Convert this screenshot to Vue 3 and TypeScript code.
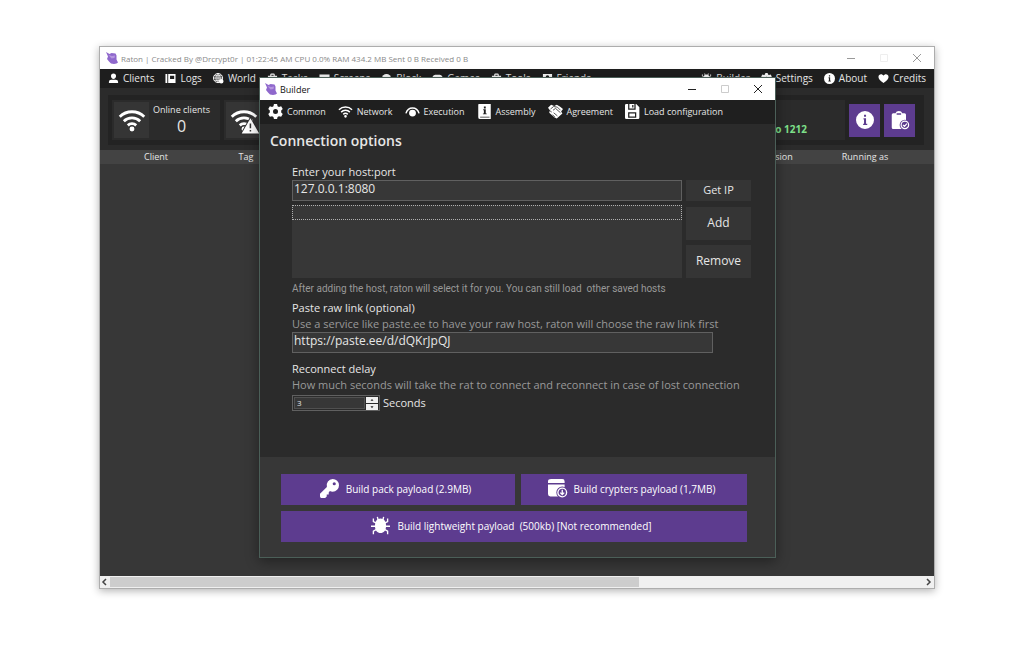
<script setup lang="ts">
import { ref } from 'vue'

interface Shape {
  d: string
  line?: number
  color?: string
}

const white = '#ffffff'
const wifi: Shape[] = [
  { d: 'M1.5 9.2a15 15 0 0 1 21 0', line: 2.4 },
  { d: 'M5 13a10 10 0 0 1 14 0', line: 2.4 },
  { d: 'M8.4 16.6a5.2 5.2 0 0 1 7.2 0', line: 2.4 },
  { d: 'M12 17.6a2.1 2.1 0 1 0 0 4.2a2.1 2.1 0 0 0 0-4.2z' },
]

const icons: Record<string, Shape[]> = {
  user: [{ d: 'M12 1a5.5 5.5 0 0 1 5.5 5.5c0 3.5-2.5 6.5-5.5 6.5s-5.5-3-5.5-6.5A5.5 5.5 0 0 1 12 1zM2 22v-3q0-4.5 5-4.5h10q5 0 5 4.5v3z' }],
  logs: [{ d: 'M1 2h4v20H1zM7 2h16v20H7zM11 6v7h9V6z' }],
  world: [
    { d: 'M11 1a10 10 0 1 0 0 20a10 10 0 0 0 0-20z', line: 2 },
    { d: 'M1 11h20M11 1v20M3 6h16M3 16h16M11 1c-6 6-6 14 0 20M11 1c6 6 6 14 0 20', line: 1.8 },
    { d: 'M18 13a5 5 0 1 0 0 10a5 5 0 0 0 0-10z' },
  ],
  bag: [{ d: 'M7 6V4q0-3 3-3h4q3 0 3 3v2h5v16H2V6zM9.5 6h5V4h-5z' }],
  screen: [{ d: 'M1 3h22v14H1zM8 19h8v3H8z' }],
  ball: [{ d: 'M12 2a10 10 0 1 0 0 20a10 10 0 0 0 0-20z' }],
  pad: [{ d: 'M7 4h10q7 0 7 14q-4 3-8-3H8q-4 6-8 3Q0 4 7 4z' }],
  friend: [{ d: 'M2 2h20v20H2zM12 5a4 4 0 1 0 0 8a4 4 0 0 0 0-8z' }],
  gear: [
    { d: 'M9.5 0h5l.8 3.4 2.2 1.2L21 3.5l2.6 4.4-2.5 2.5v3.2l2.5 2.5L21 20.5l-3.5-1.1-2.2 1.2-.8 3.4h-5l-.8-3.4-2.2-1.2L3 20.5.4 16.1l2.5-2.5v-3.2L.4 7.9 3 3.5l3.5 1.1 2.2-1.2zM12 8a4 4 0 1 0 0 8a4 4 0 0 0 0-8z' },
  ],
  about: [{ d: 'M12 0a12 12 0 1 0 0 24a12 12 0 0 0 0-24zM10.7 5h2.7v2.7h-2.7zM10 9.5h3.4V17H15v1.8H9.5V17h1.2v-5.6H10z' }],
  heart: [{ d: 'M12 22C4 16 1 12.5 1 8.5C1 2 9 .5 12 6C15 .5 23 2 23 8.5C23 12.5 20 16 12 22z' }],
  wifi,
  wifiAlert: [
    ...wifi,
    { d: 'M17.5 10.5L25 23.5H10z', line: 1.5, color: '#2b2b2b' },
    { d: 'M17.5 10.5L25 23.5H10z' },
    { d: 'M17.5 15v4M17.5 20.5v1.4', line: 1.3, color: '#333333' },
  ],
  clipboard: [
    { d: 'M6 3q1-3 4.5-3T15 3h3q2 0 2 2v17q0 2-2 2H3q-2 0-2-2V5q0-2 2-2zM7.5 3v2h6V3z' },
    { d: 'M18.5 11.5a7 7 0 1 0 0 14a7 7 0 0 0 0-14z', color: '#5d3c8f' },
    { d: 'M18.5 13.5a5 5 0 1 0 0 10a5 5 0 0 0 0-10zM16 18.5l2 2 3.2-3.6', line: 1.6 },
  ],
  eye: [
    { d: 'M1.5 15C5 3.5 19 3.5 22.5 15', line: 2.3 },
    { d: 'M12 9a5.5 5.5 0 1 0 0 11a5.5 5.5 0 0 0 0-11z' },
  ],
  book: [{ d: 'M3 0h19v24H5q-3 0-3-3V1q0-1 1-1zM5 20.5v1h15v-1zM11 4h3v3h-3zM10 8.5h4V15h1.5v1.5H9.5V15H11v-5h-1z' }],
  hands: [
    { d: 'M0 6l5-5 5 2 4-2 5 3 5 4-3 4 2 3-9 8-4-2-8-7 1-4z' },
    { d: 'M4 8l5-4 6 1 5 5M8 10l4-3 8 7M9 14l6 5M7 17l4 4M2 10l4 3', line: 1.2, color: '#242424' },
  ],
  floppy: [{ d: 'M2 0h3v9h12V0h1l5 5v17q0 2-2 2H2q-2 0-2-2V2q0-2 2-2zM7 0h8v7H7zM11.5 1.5v4h2v-4zM5 13v9h13v-9zM7 15h9v5H7z' }],
  key: [{ d: 'M16 0a8 8 0 0 1 0 16q-2 0-3.5-.7L11 17v2.5H8.5V22L6.5 24H1l-1-2v-3.5L8.7 10A8 8 0 0 1 16 0zM18 4a2 2 0 1 0 0 4a2 2 0 0 0 0-4z' }],
  archive: [
    { d: 'M4 0h14q3 0 3 3v2H0V3q0-3 4-3zM0 7h21v12q0 3-3 3H3q-3 0-3-3z' },
    { d: 'M18 9.5a7.5 7.5 0 1 0 0 15a7.5 7.5 0 0 0 0-15z', color: '#5d3c8f' },
    { d: 'M18 11.5a5.5 5.5 0 1 0 0 11a5.5 5.5 0 0 0 0-11zM18 13.5v6M15.5 17.2L18 19.7l2.5-2.5', line: 1.7 },
  ],
  bug: [
    { d: 'M12 3c5 0 7 4 7 9.5s-3 9-7 9-7-3.5-7-9S7 3 12 3z' },
    { d: 'M9 5L8 1M15 5l1-4M7 9L3 7V3M17 9l4-2V3M7 13H0M17 13h7M7 17l-4 2v4M17 17l4 2v4', line: 1.7 },
  ],
}

const menuLeft = [
  { label: 'Clients', icon: 'user' },
  { label: 'Logs', icon: 'logs' },
  { label: 'World', icon: 'world' },
  { label: 'Tasks', icon: 'bag' },
  { label: 'Screens', icon: 'screen' },
  { label: 'Block', icon: 'ball' },
  { label: 'Games', icon: 'pad' },
  { label: 'Tools', icon: 'bag' },
  { label: 'Friends', icon: 'friend' },
]
const menuRight = [
  { label: 'Builder', icon: 'bug' },
  { label: 'Settings', icon: 'gear' },
  { label: 'About', icon: 'about' },
  { label: 'Credits', icon: 'heart' },
]
const tabs = [
  { label: 'Common', icon: 'gear' },
  { label: 'Network', icon: 'wifi' },
  { label: 'Execution', icon: 'eye' },
  { label: 'Assembly', icon: 'book' },
  { label: 'Agreement', icon: 'hands' },
  { label: 'Load configuration', icon: 'floppy' },
]

const host = ref('127.0.0.1:8080')
const rawLink = ref('https://paste.ee/d/dQKrJpQJ')
const delay = ref(3)

const paint = (s: Shape) =>
  s.line
    ? { fill: 'none', stroke: s.color ?? white, 'stroke-width': s.line }
    : { fill: s.color ?? white }
</script>

<template>
  <main class="desktop">
    <section class="window">
      <header class="titlebar">
        <svg class="logo" viewBox="0 0 24 24">
          <path fill="#8f68cc" d="M0 0l7 4 4-2 8 1 2 4v8l3 6-3 2-5 1-6-1-4-4-4-5 2-5z" />
          <path fill="#b596df" d="M5 6l7 2 6-1-1 5-6 1z" />
        </svg>
        <span class="caption">Raton | Cracked By @Drcrypt0r | 01:22:45 AM CPU 0.0% RAM 434.2 MB Sent 0 B Received 0 B</span>
        <div class="controls">
          <button type="button" aria-label="Minimize"><svg viewBox="0 0 10 10"><path d="M1 5.5h8" /></svg></button>
          <button type="button" aria-label="Maximize" disabled><svg viewBox="0 0 10 10"><path d="M1.5 1.5h7v7h-7z" /></svg></button>
          <button type="button" aria-label="Close"><svg viewBox="0 0 10 10"><path d="M1 1l8 8M9 1l-8 8" /></svg></button>
        </div>
      </header>

      <nav class="menu">
        <button v-for="m in menuLeft" :key="m.label" type="button" class="menu-item">
          <svg viewBox="0 0 24 24"><path v-for="(s, i) in icons[m.icon]" :key="i" :d="s.d" fill-rule="evenodd" v-bind="paint(s)" /></svg>
          {{ m.label }}
        </button>
        <span class="spacer"></span>
        <button v-for="m in menuRight" :key="m.label" type="button" class="menu-item">
          <svg viewBox="0 0 24 24"><path v-for="(s, i) in icons[m.icon]" :key="i" :d="s.d" fill-rule="evenodd" v-bind="paint(s)" /></svg>
          {{ m.label }}
        </button>
      </nav>

      <div class="stats">
        <div class="card">
          <div class="card-icon">
            <svg viewBox="0 0 24 24"><path v-for="(s, i) in icons.wifi" :key="i" :d="s.d" v-bind="paint(s)" /></svg>
          </div>
          <div class="card-text">
            <span>Online clients</span>
            <strong>0</strong>
          </div>
        </div>
        <div class="card">
          <div class="card-icon">
            <svg viewBox="0 0 24 24"><path v-for="(s, i) in icons.wifiAlert" :key="i" :d="s.d" v-bind="paint(s)" /></svg>
          </div>
        </div>
        <div class="card wide"><span class="status">o 1212</span></div>
        <button type="button" class="square" aria-label="Information">
          <svg viewBox="0 0 24 24"><path v-for="(s, i) in icons.about" :key="i" :d="s.d" fill-rule="evenodd" v-bind="paint(s)" /></svg>
        </button>
        <button type="button" class="square" aria-label="Tasks done">
          <svg viewBox="0 0 24 24"><path v-for="(s, i) in icons.clipboard" :key="i" :d="s.d" fill-rule="evenodd" v-bind="paint(s)" /></svg>
        </button>
      </div>

      <table class="clients">
        <colgroup>
          <col class="c-client" /><col class="c-tag" /><col /><col class="c-version" /><col class="c-run" />
        </colgroup>
        <thead>
          <tr><th>Client</th><th>Tag</th><th></th><th>Version</th><th>Running as</th></tr>
        </thead>
      </table>
      <div class="rows"></div>

      <div class="scrollbar">
        <button type="button" aria-label="Scroll left"><svg viewBox="0 0 10 10"><path d="M6 2L3 5l3 3" /></svg></button>
        <div class="track"><div class="thumb"></div></div>
        <button type="button" aria-label="Scroll right"><svg viewBox="0 0 10 10"><path d="M3 2l3 3-3 3" /></svg></button>
      </div>

      <section class="dialog" role="dialog" aria-label="Builder">
        <header class="titlebar active">
          <svg class="logo" viewBox="0 0 24 24">
            <path fill="#8f68cc" d="M0 0l7 4 4-2 8 1 2 4v8l3 6-3 2-5 1-6-1-4-4-4-5 2-5z" />
            <path fill="#b596df" d="M5 6l7 2 6-1-1 5-6 1z" />
          </svg>
          <span class="caption">Builder</span>
          <div class="controls">
            <button type="button" aria-label="Minimize"><svg viewBox="0 0 10 10"><path d="M1 5.5h8" /></svg></button>
            <button type="button" aria-label="Maximize" disabled><svg viewBox="0 0 10 10"><path d="M1.5 1.5h7v7h-7z" /></svg></button>
            <button type="button" aria-label="Close"><svg viewBox="0 0 10 10"><path d="M1 1l8 8M9 1l-8 8" /></svg></button>
          </div>
        </header>

        <nav class="tabs">
          <button v-for="t in tabs" :key="t.label" type="button" class="tab">
            <svg viewBox="0 0 24 24"><path v-for="(s, i) in icons[t.icon]" :key="i" :d="s.d" fill-rule="evenodd" v-bind="paint(s)" /></svg>
            {{ t.label }}
          </button>
        </nav>

        <div class="content">
          <h1>Connection options</h1>
          <form class="form" @submit.prevent>
            <label for="host">Enter your host:port</label>
            <div class="hosts">
              <input id="host" v-model="host" type="text" class="box" />
              <button type="button" class="flat">Get IP</button>
              <ul class="list" role="listbox" aria-label="Hosts">
                <li role="option" aria-selected="true"></li>
              </ul>
              <div class="actions">
                <button type="button" class="flat">Add</button>
                <button type="button" class="flat">Remove</button>
              </div>
            </div>
            <p class="note">After adding the host, raton will select it for you. You can still load&nbsp; other saved hosts</p>

            <label for="raw" class="next">Paste raw link (optional)</label>
            <p class="hint">Use a service like paste.ee to have your raw host, raton will choose the raw link first</p>
            <input id="raw" v-model="rawLink" type="text" class="box raw" />

            <label for="delay" class="later">Reconnect delay</label>
            <p class="hint">How much seconds will take the rat to connect and reconnect in case of lost connection</p>
            <div class="delay">
              <div class="spin">
                <input id="delay" v-model.number="delay" type="number" min="0" />
                <div class="steps">
                  <button type="button" aria-label="More" @click="delay++"><svg viewBox="0 0 8 8"><path d="M2 5l2-2.5L6 5z" /></svg></button>
                  <button type="button" aria-label="Less" @click="delay--"><svg viewBox="0 0 8 8"><path d="M2 3l2 2.5L6 3z" /></svg></button>
                </div>
              </div>
              <span>Seconds</span>
            </div>
          </form>
        </div>

        <footer class="builds">
          <button type="button" class="build">
            <svg viewBox="0 0 24 24"><path v-for="(s, i) in icons.key" :key="i" :d="s.d" fill-rule="evenodd" v-bind="paint(s)" /></svg>
            Build pack payload (2.9MB)
          </button>
          <button type="button" class="build">
            <svg viewBox="0 0 24 24"><path v-for="(s, i) in icons.archive" :key="i" :d="s.d" v-bind="paint(s)" /></svg>
            Build crypters payload (1,7MB)
          </button>
          <button type="button" class="build full">
            <svg viewBox="0 0 24 24"><path v-for="(s, i) in icons.bug" :key="i" :d="s.d" v-bind="paint(s)" /></svg>
            Build lightweight payload&nbsp; (500kb) [Not recommended]
          </button>
        </footer>
      </section>
    </section>
  </main>
</template>

<style>
body {
  background: #ffffff;
}
</style>

<style scoped>
* {
  box-sizing: border-box;
}
button,
input {
  font: inherit;
  color: inherit;
  margin: 0;
  padding: 0;
  border: 0;
  background: none;
}
svg {
  display: block;
  flex: none;
  overflow: visible;
}
.desktop {
  min-height: 100vh;
  display: flex;
  padding: 46px 89px 61px 99px;
  font-family: "Open Sans", "Noto Sans", sans-serif;
  font-size: 10px;
  color: #e6e6e6;
}
.window {
  position: relative;
  flex: 1;
  display: flex;
  flex-direction: column;
  border: 1px solid #adadad;
  background: #2b2b2b;
  box-shadow: 0 2px 8px rgba(0, 0, 0, 0.3);
}
.titlebar {
  display: flex;
  align-items: center;
  height: 22px;
  padding: 0 1px 0 6px;
  background: #ffffff;
  color: #8a8a8a;
  font-size: 8px;
}
.logo {
  width: 12px;
  height: 12px;
  margin-right: 3px;
}
.caption {
  flex: 1;
  white-space: nowrap;
}
.controls {
  display: flex;
}
.controls button {
  display: flex;
  align-items: center;
  justify-content: center;
  width: 33px;
  height: 21px;
}
.controls svg {
  width: 10px;
  height: 10px;
}
.controls path {
  fill: none;
  stroke: #999999;
}
.controls button:disabled path {
  stroke: #eeeeee;
}
.active {
  padding-left: 5px;
  color: #111111;
  font-size: 9px;
}
.active .controls path {
  stroke: #222222;
}
.active .controls button:disabled path {
  stroke: #cccccc;
}
.menu {
  display: flex;
  align-items: center;
  gap: 11px;
  height: 19px;
  padding: 0 8px 1px;
  background: #1e1e1e;
}
.menu-item {
  display: flex;
  align-items: center;
  gap: 4px;
}
.menu-item svg {
  width: 11px;
  height: 11px;
}
.spacer {
  flex: 1;
}
.stats {
  display: flex;
  align-items: center;
  gap: 4px;
  height: 50px;
  margin: 7px 10px 5px 8px;
  padding: 0 9px 0 4px;
  background: #232323;
}
.card {
  display: flex;
  align-items: center;
  width: 108px;
  height: 40px;
  padding: 2px;
  background: #2b2b2b;
}
.card-icon {
  display: flex;
  align-items: center;
  justify-content: center;
  width: 35px;
  height: 36px;
  background: #353535;
}
.card-icon svg {
  width: 28px;
  height: 28px;
}
.card-text {
  flex: 1;
  display: flex;
  flex-direction: column;
  align-items: center;
  padding-right: 4px;
  font-size: 9px;
  line-height: 12px;
  white-space: nowrap;
}
.card-text strong {
  font-size: 16px;
  line-height: 20px;
  font-weight: 400;
}
.wide {
  flex: 1;
  justify-content: flex-end;
  padding: 17px 38px 0 0;
}
.status {
  font-weight: 700;
  color: #7ee08a;
}
.square {
  display: flex;
  align-items: center;
  justify-content: center;
  width: 31px;
  height: 33px;
  background: #5d3c8f;
}
.square svg {
  width: 18px;
  height: 18px;
}
.clients {
  width: 100%;
  table-layout: fixed;
  border-collapse: collapse;
  background: #434343;
}
.clients th {
  height: 14px;
  padding: 0;
  font-size: 9px;
  line-height: 12px;
  font-weight: 400;
}
.c-client {
  width: 112px;
}
.c-tag {
  width: 68px;
}
.c-version {
  width: 38px;
}
.c-run {
  width: 138px;
}
.rows {
  flex: 1;
  background: #373737;
}
.scrollbar {
  display: flex;
  height: 12px;
  background: #f0f0f0;
}
.scrollbar button {
  display: flex;
  align-items: center;
  justify-content: center;
  width: 10px;
}
.scrollbar svg {
  width: 10px;
  height: 10px;
}
.scrollbar path {
  fill: none;
  stroke: #444444;
  stroke-width: 1.5;
}
.track {
  flex: 1;
  padding: 1px 0;
}
.thumb {
  width: 65%;
  height: 100%;
  background: #cdcdcd;
}
.dialog {
  position: absolute;
  top: 30px;
  left: 159px;
  right: 158px;
  border: 1px solid #4b5f58;
  background: #2b2b2b;
  box-shadow: 0 3px 12px rgba(0, 0, 0, 0.4);
}
.tabs {
  display: flex;
  align-items: center;
  gap: 12px;
  height: 24px;
  padding: 0 0 1px 8px;
  background: #1f1f1f;
}
.tab {
  display: flex;
  align-items: center;
  gap: 4px;
  font-size: 9px;
  white-space: nowrap;
}
.tab svg {
  width: 15px;
  height: 15px;
}
.content {
  padding: 7px 24px 46px 10px;
}
h1 {
  margin: 0 0 13px;
  font-size: 14px;
  line-height: 20px;
  font-weight: 600;
}
.form {
  padding-left: 22px;
  font-size: 11px;
}
.form label {
  display: block;
  line-height: 16px;
}
.box {
  display: block;
  width: 100%;
  height: 21px;
  padding: 0 1px 4px;
  border: 1px solid #606060;
  background: #373737;
  font-size: 12px;
}
.raw {
  width: calc(100% - 38px);
  margin-top: 1px;
}
.hosts {
  display: grid;
  grid-template-columns: 1fr 65px;
  gap: 4px;
}
.flat {
  padding-bottom: 2px;
  background: #353535;
}
.list {
  height: 73px;
  margin: 0;
  padding: 0;
  list-style: none;
  background: #373737;
}
.list li {
  height: 15px;
  border: 1px dotted #b0b0b0;
}
.actions {
  display: flex;
  flex-direction: column;
  gap: 5px;
  padding-top: 2px;
}
.actions .flat {
  flex: 1;
  font-size: 12px;
}
.note,
.hint {
  margin: 0;
  color: #999999;
  white-space: nowrap;
}
.note {
  padding-top: 1px;
  font-family: Roboto, "Open Sans", sans-serif;
  font-size: 10px;
  line-height: 20px;
}
.hint {
  line-height: 15px;
}
.form .next {
  margin-top: 1px;
}
.form .later {
  margin-top: 8px;
}
.delay {
  display: flex;
  align-items: center;
  gap: 3px;
  margin-top: 3px;
  line-height: 16px;
}
.spin {
  display: flex;
  width: 88px;
  height: 16px;
  padding: 1px;
  border: 1px solid #606060;
}
.spin input {
  flex: 1;
  min-width: 0;
  padding-left: 2px;
  border: 1px solid #505050;
  background: #373737;
  font-size: 8px;
  appearance: textfield;
}
.spin input::-webkit-inner-spin-button {
  appearance: none;
}
.steps {
  display: flex;
  flex-direction: column;
  gap: 1px;
  width: 12px;
  margin-left: 1px;
}
.steps button {
  flex: 1;
  display: flex;
  align-items: center;
  justify-content: center;
  background: #f0f0f0;
}
.steps svg {
  width: 6px;
  height: 6px;
}
.steps path {
  fill: #222222;
}
.builds {
  display: grid;
  grid-template-columns: 234fr 226fr;
  gap: 6px;
  padding: 17px 28px 15px 21px;
  background: #373737;
}
.build {
  display: flex;
  align-items: center;
  justify-content: center;
  gap: 7px;
  height: 31px;
  padding: 0 5px 2px 0;
  background: #5d3c8f;
  color: #ffffff;
  font-weight: 500;
}
.build svg {
  width: 19px;
  height: 19px;
}
.full {
  grid-column: 1 / -1;
}
</style>
